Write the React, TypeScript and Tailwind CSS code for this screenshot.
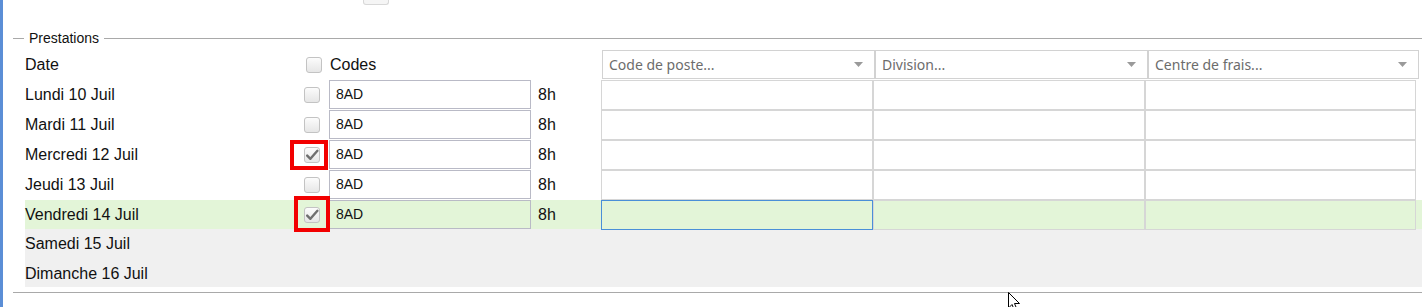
const rows = [
  { day: 'Lundi 10 Juil', code: '8AD', checked: false },
  { day: 'Mardi 11 Juil', code: '8AD', checked: false },
  { day: 'Mercredi 12 Juil', code: '8AD', checked: true, mark: 'a' },
  { day: 'Jeudi 13 Juil', code: '8AD', checked: false },
  { day: 'Vendredi 14 Juil', code: '8AD', checked: true, mark: 'b', active: true },
]

const off = [
  { day: 'Samedi 15 Juil', pad: 'pt-[1px]' },
  { day: 'Dimanche 16 Juil', pad: 'pt-[3px]' },
]

function Box({ checked }: { checked?: boolean }) {
  return (
    <div className="w-[16px] h-[16px] shrink-0 rounded-[3px] border border-[#c3c3c3] bg-gradient-to-b from-[#fcfcfc] to-[#e6e6e6] flex items-center justify-center">
      {checked && (
        <svg width="14" height="14" viewBox="0 0 14 14">
          <path d="M2.2 7.6 L5.4 10.8 L12.4 2.8" fill="none" stroke="#6f6f6f" strokeWidth="2.4" strokeLinecap="round" strokeLinejoin="round" />
        </svg>
      )}
    </div>
  )
}

function Picker({ label, w }: { label: string; w: string }) {
  return (
    <div className={`${w} h-[29px] shrink-0 border border-[#d2d2d2] bg-white flex items-center justify-between pl-[6px] pr-[11px]`}>
      <span className="font-['Noto_Sans',sans-serif] text-[14px] text-[#6c6c6c]">{label}</span>
      <svg width="9" height="5" viewBox="0 0 9 5">
        <polygon points="0,0 9,0 4.5,5" fill="#9a9a9a" />
      </svg>
    </div>
  )
}

export default function App() {
  return (
    <div className="w-[1422px] h-[307px] overflow-hidden bg-white flex font-['Liberation_Sans',Arial,sans-serif] text-[16px] text-[#111]">
      <div className="w-[3px] shrink-0 bg-[#5b8ed6]" />
      <div className="flex-1 relative">
        <div className="h-[6px] pl-[360px]">
          <div className="w-[26px] h-[5px] border border-t-0 border-[#d8d8d8] rounded-b-[3px] bg-[#f5f5f5]" />
        </div>

        <div className="mt-[24px] h-[16px] pl-[10px] flex items-center">
          <div className="w-[11px] h-px bg-[#a9a9a9]" />
          <span className="px-[5px] text-[14px] leading-[16px]">Prestations</span>
          <div className="flex-1 h-px bg-[#a9a9a9]" />
        </div>

        <div className="mt-[4px] pl-[22px]">
          <div className="h-[29px] mb-px flex items-center">
            <div className="w-[281px] shrink-0">Date</div>
            <Box />
            <div className="w-[280px] shrink-0 pl-[8px]">Codes</div>
            <Picker label="Code de poste..." w="w-[273px]" />
            <Picker label="Division..." w="w-[273px]" />
            <Picker label="Centre de frais..." w="w-[271px]" />
          </div>

          {rows.map((r, i) => (
            <div
              key={r.day}
              className={`relative h-[29px] flex items-start ${i < rows.length - 1 ? 'mb-px' : ''} ${r.active ? 'bg-[#e3f5d8]' : ''}`}
            >
              <div className="w-[279px] shrink-0 h-[29px] flex items-center">{r.day}</div>
              <div className="h-[29px] flex items-center">
                <Box checked={r.checked} />
              </div>
              <div
                className={`ml-[9px] w-[202px] h-[29px] shrink-0 border border-[#b9bac6] pl-[6px] flex items-center text-[14px] ${r.active ? '' : 'bg-white'}`}
              >
                {r.code}
              </div>
              <div className="ml-[7px] w-[63px] shrink-0 h-[29px] flex items-center">8h</div>
              <div
                className={`w-[272px] h-[30px] shrink-0 border ${r.active ? 'border-[#4a8fd8]' : 'border-[#d6d6d6] bg-white'}`}
              />
              <div className={`w-[272px] h-[30px] shrink-0 border border-[#d6d6d6] ${r.active ? '' : 'bg-white'}`} />
              <div className={`w-[271px] h-[30px] shrink-0 border border-[#d6d6d6] ${r.active ? '' : 'bg-white'}`} />

              {r.mark === 'a' && (
                <div className="absolute left-[265px] top-0 w-[38px] h-[30px] border-4 border-[#f20000]" />
              )}
              {r.mark === 'b' && (
                <div className="absolute left-[269px] -top-[4px] w-[36px] h-[36px] border-4 border-[#f20000]" />
              )}
            </div>
          ))}

          <div className="bg-[#f0f0f0]">
            {off.map((d) => (
              <div key={d.day} className={`h-[29px] flex items-center ${d.pad}`}>{d.day}</div>
            ))}
          </div>
        </div>

        <div className="mt-[5px] ml-[10px] h-px bg-[#a9a9a9]" />

        <svg className="absolute left-[1005px] top-[292px]" width="13" height="20" viewBox="0 0 13 20">
          <path d="M0.5 0.5 L0.5 16 L4 12.5 L6.5 18.5 L9 17.5 L6.5 11.5 L11.5 11.5 Z" fill="white" stroke="black" strokeWidth="1" />
        </svg>
      </div>
    </div>
  )
}
